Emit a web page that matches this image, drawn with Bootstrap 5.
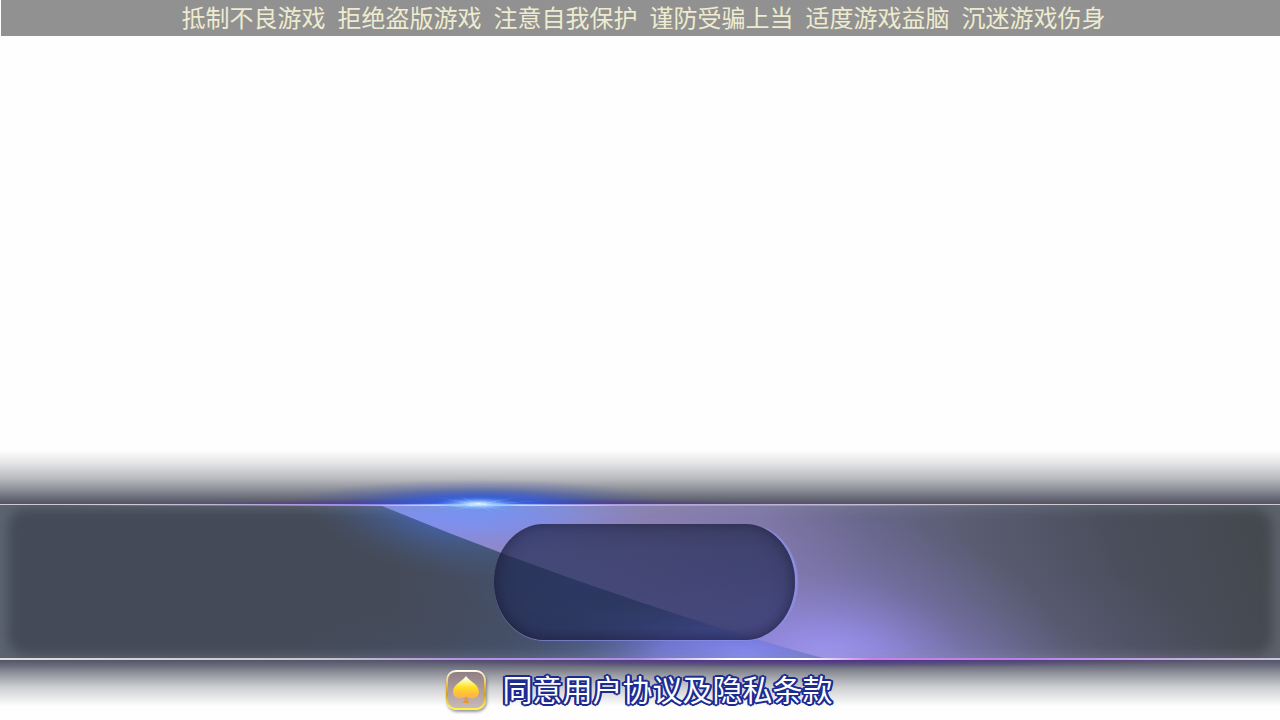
<!DOCTYPE html>
<html lang="zh-CN">
<head>
<meta charset="utf-8">
<meta name="viewport" content="width=device-width, initial-scale=1">
<title>用户协议</title>
<link href="https://cdn.jsdelivr.net/npm/bootstrap@5.3.0/dist/css/bootstrap.min.css" rel="stylesheet">
<style>
  body { font-family: "Noto Sans CJK SC", sans-serif; background: #fefefe; }
  .notice { background: #919191; color: #eeebcf; font-size: 24px; line-height: 34px; column-gap: 12px; margin-left: 1px; padding: 0 0 2px 6px; }
  .stage-area { padding: 74px 0 10px; }
  .backdrop { z-index: 0; }
  .front { z-index: 1; }
  .start-btn {
    width: 301px; height: 116px; margin-left: 9px; margin-bottom: 30px;
    border: 0; border-radius: 50px / 58px;
    background: linear-gradient(180deg, rgba(30, 40, 78, .68), rgba(32, 42, 90, .64));
    box-shadow: inset 0 0 20px rgba(28, 22, 46, .45), inset 0 -2px 8px rgba(20, 20, 50, .3), 4px 0 1px -1px #8d8ce0, 0 1px 0 rgba(140, 148, 235, .6);
  }
  .agree { min-height: 40px; column-gap: 17px; padding-right: 2px; }
  .tick-wrap { width: 40px; height: 40px; }
  .tick-wrap input {
    appearance: none; width: 40px; height: 40px; border: 2px solid transparent; border-radius: 10px;
    background: linear-gradient(#8f7f83, #c7bab8) padding-box, linear-gradient(180deg, #fffdf2, #e0ae2c 45%, #cf9f22 62%, #fff04e 92%) border-box;
    box-shadow: 1px 2px 3px rgba(0, 0, 0, .4);
  }
  .tick-wrap svg { pointer-events: none; }
  .agree-text {
    font-size: 30px; line-height: 36px; font-weight: 400; color: #fff;
    text-shadow: 2px 0 #1c2b91, -2px 0 #1c2b91, 0 2px #1c2b91, 0 -2px #1c2b91, 1px 1px #1c2b91, -1px 1px #1c2b91, 1px -1px #1c2b91, -1px -1px #1c2b91, 2px 1px #1c2b91, -2px 1px #1c2b91, 2px -1px #1c2b91, -2px -1px #1c2b91, 0 0 2px #1c2b91;
  }
</style>
</head>
<body>
<div class="d-flex flex-column min-vh-100 overflow-hidden">
  <header class="notice d-flex flex-wrap justify-content-center">
    <span>抵制不良游戏</span><span>拒绝盗版游戏</span><span>注意自我保护</span><span>谨防受骗上当</span><span>适度游戏益脑</span><span>沉迷游戏伤身</span>
  </header>
  <main class="flex-grow-1 d-flex flex-column justify-content-end">
    <section class="stage-area position-relative">
      <svg class="backdrop position-absolute top-0 start-0 w-100 h-100" viewBox="0 450 1280 270" preserveAspectRatio="none" aria-hidden="true">
        <defs>
          <linearGradient id="fadeTop" x1="0" y1="0" x2="0" y2="1">
            <stop offset="0" stop-color="#fefefe"/><stop offset=".22" stop-color="#e6e7e8"/><stop offset=".52" stop-color="#b9babe"/><stop offset=".75" stop-color="#858892"/><stop offset=".92" stop-color="#5f6070"/><stop offset="1" stop-color="#504f63"/>
          </linearGradient>
          <linearGradient id="fadeBottom" x1="0" y1="0" x2="0" y2="1">
            <stop offset="0" stop-color="#505064"/><stop offset=".14" stop-color="#6a6b7b"/><stop offset=".35" stop-color="#9b9da5"/><stop offset=".6" stop-color="#cdced1"/><stop offset="1" stop-color="#fefefe"/>
          </linearGradient>
          <linearGradient id="beam" x1="380" y1="505" x2="1240" y2="505" gradientUnits="userSpaceOnUse" gradientTransform="rotate(-18 700 580)">
            <stop offset="0" stop-color="#858ce6"/><stop offset=".15" stop-color="#8f88c4"/><stop offset=".34" stop-color="#8a80b2"/><stop offset=".46" stop-color="#8078a8"/><stop offset=".58" stop-color="#68668a"/><stop offset=".7" stop-color="#595b70"/><stop offset=".84" stop-color="#4b4f5d"/><stop offset="1" stop-color="#44484f"/>
          </linearGradient>
          <linearGradient id="topLine">
            <stop offset=".05" stop-color="#b08ae0" stop-opacity="0"/><stop offset=".2" stop-color="#8c68dc"/><stop offset=".28" stop-color="#a88aff"/><stop offset=".34" stop-color="#fff"/><stop offset=".42" stop-color="#fff"/><stop offset=".48" stop-color="#c397f5"/><stop offset=".66" stop-color="#a981e2"/><stop offset=".82" stop-color="#8a6ac0" stop-opacity="0"/>
          </linearGradient>
          <linearGradient id="topTint">
            <stop offset="0" stop-color="#a47fe5" stop-opacity="0"/><stop offset=".3" stop-color="#8f6cf0" stop-opacity=".8"/><stop offset=".6" stop-color="#a47fe5" stop-opacity=".6"/><stop offset="1" stop-color="#a47fe5" stop-opacity="0"/>
          </linearGradient>
          <linearGradient id="bottomLine">
            <stop offset="0" stop-color="#e0e0e0"/><stop offset=".25" stop-color="#c7c7cd"/><stop offset=".36" stop-color="#b792e3"/><stop offset=".5" stop-color="#b18bea"/><stop offset=".57" stop-color="#fff"/><stop offset=".63" stop-color="#fff"/><stop offset=".68" stop-color="#c982e6"/><stop offset=".8" stop-color="#b981ea"/><stop offset="1" stop-color="#d0c6df"/>
          </linearGradient>
          <radialGradient id="blueGlow"><stop offset="0" stop-color="#3d6cf5"/><stop offset=".35" stop-color="#335ce0" stop-opacity=".8"/><stop offset=".7" stop-color="#3450c8" stop-opacity=".25"/><stop offset="1" stop-color="#3450c8" stop-opacity="0"/></radialGradient>
          <radialGradient id="softBlue"><stop offset="0" stop-color="#426fe8" stop-opacity=".95"/><stop offset=".5" stop-color="#4668b4" stop-opacity=".45"/><stop offset="1" stop-color="#465a80" stop-opacity="0"/></radialGradient>
          <radialGradient id="beamBlue"><stop offset="0" stop-color="#6c96ff"/><stop offset=".5" stop-color="#7a92fa" stop-opacity=".6"/><stop offset="1" stop-color="#8a8ae0" stop-opacity="0"/></radialGradient>
          <radialGradient id="violetGlow"><stop offset="0" stop-color="#a59cfa"/><stop offset=".25" stop-color="#998ff0" stop-opacity=".75"/><stop offset=".6" stop-color="#8a80d0" stop-opacity=".25"/><stop offset="1" stop-color="#8078c0" stop-opacity="0"/></radialGradient>
          <radialGradient id="lowGlow"><stop offset="0" stop-color="#8488f4"/><stop offset=".35" stop-color="#777de0" stop-opacity=".85"/><stop offset=".65" stop-color="#5f6cb0" stop-opacity=".4"/><stop offset="1" stop-color="#485577" stop-opacity="0"/></radialGradient>
          <radialGradient id="flare"><stop offset="0" stop-color="#fff"/><stop offset=".25" stop-color="#b6dcff" stop-opacity=".9"/><stop offset="1" stop-color="#4a8aff" stop-opacity="0"/></radialGradient>
          <radialGradient id="purpleHaze"><stop offset="0" stop-color="#4c2b90" stop-opacity=".9"/><stop offset="1" stop-color="#4c2b90" stop-opacity="0"/></radialGradient>
          <filter id="soft" x="-5%" y="-20%" width="110%" height="140%"><feGaussianBlur stdDeviation="6"/></filter>
          <clipPath id="panelClip"><rect y="505" width="1280" height="154"/></clipPath>
          <clipPath id="aboveClip"><rect y="450" width="1280" height="55"/></clipPath>
          <clipPath id="belowClip"><rect y="659" width="1280" height="50"/></clipPath>
          <clipPath id="beamClip"><path d="M380 505Q510 559 640 602T827 659H1280V505Z"/></clipPath>
        </defs>
        <rect y="450" width="1280" height="55" fill="url(#fadeTop)"/>
        <rect y="659" width="1280" height="47" fill="url(#fadeBottom)"/>
        <g clip-path="url(#aboveClip)">
          <ellipse cx="490" cy="505" rx="290" ry="7" fill="url(#purpleHaze)"/>
          <ellipse cx="478" cy="505" rx="190" ry="26" fill="url(#blueGlow)"/>
        </g>
        <g clip-path="url(#belowClip)"><ellipse cx="800" cy="659" rx="430" ry="9" fill="url(#purpleHaze)"/></g>
        <g clip-path="url(#panelClip)">
          <rect y="505" width="1280" height="154" fill="#444a57"/>
          <ellipse cx="500" cy="670" rx="260" ry="75" fill="url(#softBlue)" opacity=".15"/>
          <ellipse cx="580" cy="580" rx="200" ry="120" fill="url(#softBlue)" opacity=".3"/>
          <ellipse cx="440" cy="505" rx="150" ry="72" fill="url(#softBlue)" transform="rotate(12 440 505)"/>
          <ellipse cx="745" cy="655" rx="250" ry="80" fill="url(#lowGlow)"/>
          <g clip-path="url(#beamClip)">
            <rect x="370" y="505" width="910" height="154" fill="url(#beam)"/>
            <ellipse cx="478" cy="503" rx="175" ry="54" fill="url(#beamBlue)"/>
            <ellipse cx="825" cy="665" rx="240" ry="150" fill="url(#violetGlow)"/>
            <ellipse cx="920" cy="680" rx="340" ry="130" fill="url(#violetGlow)" opacity=".3"/>
          </g>
          <path d="M-20 485H1300V679H-20ZM28 509Q8 509 8 529V635Q8 655 28 655H1252Q1272 655 1272 635V529Q1272 509 1252 509Z" fill="#8794a0" fill-rule="evenodd" opacity=".34" filter="url(#soft)"/>
        </g>
        <rect y="504" width="1280" height="1" fill="#cfccd1"/>
        <rect x="120" y="504" width="860" height="1" fill="url(#topTint)"/>
        <rect y="505" width="1280" height="1" fill="url(#topLine)"/>
        <rect y="658" width="1280" height="2" fill="url(#bottomLine)"/>
        <ellipse cx="478" cy="505" rx="120" ry="2" fill="url(#flare)"/>
        <ellipse cx="478" cy="504" rx="42" ry="7" fill="url(#flare)"/>
        <g fill="url(#flare)" opacity=".35">
          <ellipse cx="478" cy="505" rx="48" ry="1" transform="rotate(11 478 505)"/>
          <ellipse cx="478" cy="505" rx="48" ry="1" transform="rotate(-12 478 505)"/>
          <ellipse cx="478" cy="505" rx="80" ry="1" transform="rotate(-4 478 505)"/>
          <ellipse cx="478" cy="505" rx="26" ry="1" transform="rotate(26 478 505)"/>
        </g>
      </svg>
      <div class="front position-relative d-flex flex-column align-items-center">
        <button type="button" class="start-btn" aria-label="开始"></button>
        <div class="agree d-flex align-items-start justify-content-center">
          <div class="tick-wrap position-relative">
            <input type="checkbox" id="agree" class="d-block m-0" checked>
            <svg class="position-absolute top-0 start-0" width="40" height="40" viewBox="0 0 40 40" aria-hidden="true">
              <defs><linearGradient id="gold" x1="0" y1="0" x2="0" y2="1"><stop offset=".05" stop-color="#fffef0"/><stop offset=".3" stop-color="#fff18a"/><stop offset=".5" stop-color="#ffe21d"/><stop offset=".72" stop-color="#ffc43a"/><stop offset="1" stop-color="#ffb04d"/></linearGradient></defs>
              <path d="M19 27H21Q21 31 24 33H16Q19 31 19 27Z" fill="#e39a3f"/>
              <path d="M20 6C23 11 33 14 33 22C33 28 26 30 21 27H19C14 30 7 28 7 22C7 14 17 11 20 6Z" fill="url(#gold)"/>
            </svg>
          </div>
          <label for="agree" class="agree-text">同意用户协议及隐私条款</label>
        </div>
      </div>
    </section>
  </main>
</div>
<script src="https://cdn.jsdelivr.net/npm/bootstrap@5.3.0/dist/js/bootstrap.bundle.min.js"></script>
</body>
</html>
